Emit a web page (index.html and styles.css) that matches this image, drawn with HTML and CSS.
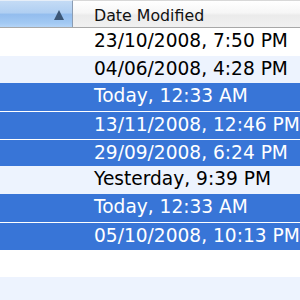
FILE: index.html
```html
<!DOCTYPE html>
<html>
<head>
<meta charset="utf-8">
<link rel="stylesheet" href="styles.css">
</head>
<body>
<div class="table">
  <div class="header">
    <div class="hcell sorted"><span class="arrow"></span></div>
    <div class="hcell date">Date Modified</div>
  </div>
  <div class="rows">
    <div class="row">23/10/2008, 7:50 PM</div>
    <div class="row alt">04/06/2008, 4:28 PM</div>
    <div class="row sel">Today, 12:33 AM</div>
    <div class="row sel">13/11/2008, 12:46 PM</div>
    <div class="row sel">29/09/2008, 6:24 PM</div>
    <div class="row alt">Yesterday, 9:39 PM</div>
    <div class="row sel">Today, 12:33 AM</div>
    <div class="row sel">05/10/2008, 10:13 PM</div>
    <div class="row"></div>
    <div class="row alt"></div>
  </div>
</div>
</body>
</html>
```
FILE: styles.css
```css
html, body {
  margin: 0;
  padding: 0;
  background: #fff;
}
.table {
  width: 300px;
  height: 300px;
  overflow: hidden;
  font-family: "DejaVu Sans", "Liberation Sans", sans-serif;
}
.header {
  display: flex;
  height: 28px;
  box-sizing: border-box;
  border-bottom: 1px solid #a8a8a8;
}
.hcell {
  box-sizing: border-box;
  height: 100%;
}
.sorted {
  width: 73px;
  flex: none;
  border-right: 1px solid #8c9db3;
  border-top: 1px solid #e6eef8;
  background: linear-gradient(to bottom, #c4dbf5 0%, #b0cff2 45%, #93bdee 52%, #a2c9f3 85%, #b4d4f6 100%);
  display: flex;
  align-items: center;
  justify-content: flex-end;
  padding-right: 8px;
}
.arrow {
  width: 0;
  height: 0;
  border-left: 5px solid transparent;
  border-right: 5px solid transparent;
  border-bottom: 10px solid #3b5676;
  margin-top: 1px;
}
.date {
  flex: 1;
  border-top: 1px solid #d8d8d8;
  background: linear-gradient(to bottom, #ffffff 0%, #f6f6f6 45%, #ebebeb 55%, #f1f1f1 100%);
  font-size: 15.8px;
  color: #111;
  padding-left: 21px;
  display: flex;
  align-items: center;
  padding-top: 3px;
}
.rows {
  display: flex;
  flex-direction: column;
}
.row {
  box-sizing: border-box;
  height: 27.7px;
  flex: none;
  display: flex;
  align-items: center;
  padding-left: 94px;
  padding-bottom: 3px;
  font-size: 18.6px;
  color: #000;
  white-space: nowrap;
  background: #fff;
}
.alt {
  background: #edf3fe;
}
.sel {
  background: #3875d7;
  color: #fff;
}
.sel + .sel {
  border-top: 1px solid #fff;
  padding-bottom: 2px;
}
```
